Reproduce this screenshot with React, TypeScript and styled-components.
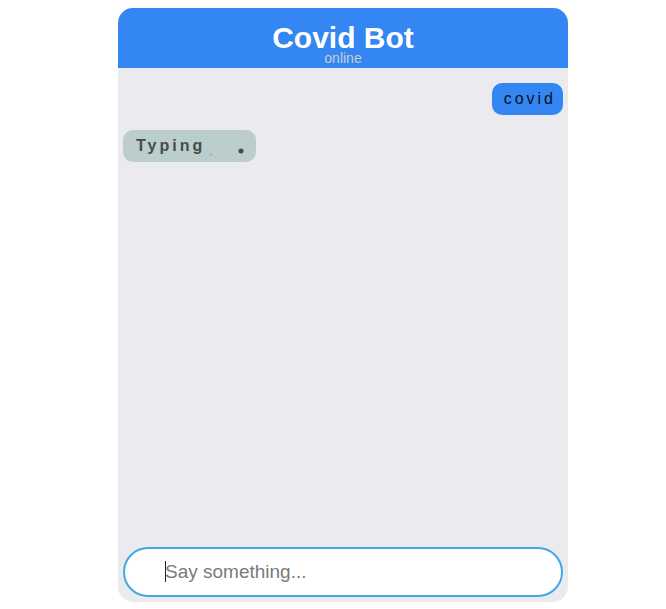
import React from "react";
import styled, { createGlobalStyle } from "styled-components";

const GlobalStyle = createGlobalStyle`
  * {
    box-sizing: border-box;
  }
  body {
    margin: 0;
    background: #fff;
    font-family: "Liberation Sans", Arial, sans-serif;
  }
`;

const Page = styled.main`
  display: flex;
  justify-content: center;
  min-height: 100vh;
  padding: 8px 0 7px 20px;
`;

const ChatCard = styled.section`
  display: flex;
  flex-direction: column;
  width: 100%;
  max-width: 450px;
  overflow: hidden;
  border-radius: 15px;
  background: #ebebef;
`;

const Header = styled.header`
  display: flex;
  flex-direction: column;
  align-items: center;
  padding: 16px 0 4px;
  background: #3486f2;
`;

const Title = styled.h1`
  margin: 0;
  color: #fff;
  font-size: 30px;
  line-height: 28px;
`;

const Status = styled.span`
  color: #c9ccd4;
  font-size: 14px;
  line-height: 12px;
`;

const Messages = styled.div`
  display: flex;
  flex: 1;
  flex-direction: column;
  gap: 15px;
  padding: 15px 5px;
`;

const Bubble = styled.div<{ $from: "user" | "bot" }>`
  display: flex;
  align-items: center;
  align-self: ${({ $from }) => ($from === "user" ? "flex-end" : "flex-start")};
  height: 32px;
  padding: ${({ $from }) => ($from === "user" ? "0 7px 0 12px" : "0 11px 0 13px")};
  border-radius: 10px;
  background: ${({ $from }) => ($from === "user" ? "#3486f2" : "#bbcecb")};
  color: ${({ $from }) => ($from === "user" ? "#06101c" : "#454c4b")};
  font-size: 16px;
  font-weight: ${({ $from }) => ($from === "user" ? 400 : 700)};
  letter-spacing: 3px;
`;

const Dots = styled.svg`
  display: block;
  width: 40px;
  height: 20px;
`;

const Composer = styled.form`
  position: relative;
  margin: 0 5px 5px;
`;

const MessageInput = styled.input`
  display: block;
  width: 100%;
  height: 50px;
  padding: 0 40px;
  border: 2px solid #3fa9e8;
  border-radius: 25px;
  outline: none;
  background: #fff;
  color: #222;
  font-family: inherit;
  font-size: 19px;

  &::placeholder {
    color: #7a7a7a;
    opacity: 1;
  }
`;

const Caret = styled.span`
  position: absolute;
  top: 14px;
  left: 42px;
  width: 1px;
  height: 21px;
  background: #222;
  pointer-events: none;
`;

export default function App() {
  const [draft, setDraft] = React.useState("");
  return (
    <>
      <GlobalStyle />
      <Page>
        <ChatCard>
          <Header>
            <Title>Covid Bot</Title>
            <Status>online</Status>
          </Header>
          <Messages>
            <Bubble $from="user">covid</Bubble>
            <Bubble $from="bot">
              Typing
              <Dots viewBox="0 0 40 20" aria-hidden="true">
                <circle cx="6" cy="19" r="2" fill="#a9bfba" />
                <circle cx="21" cy="18" r="2" fill="#b8ccc8" />
                <circle cx="36" cy="15" r="2.5" fill="#414b4a" />
              </Dots>
            </Bubble>
          </Messages>
          <Composer onSubmit={(event) => event.preventDefault()}>
            <MessageInput
              aria-label="Message"
              placeholder="Say something..."
              value={draft}
              onChange={(event) => setDraft(event.target.value)}
            />
            {draft === "" && <Caret />}
          </Composer>
        </ChatCard>
      </Page>
    </>
  );
}
